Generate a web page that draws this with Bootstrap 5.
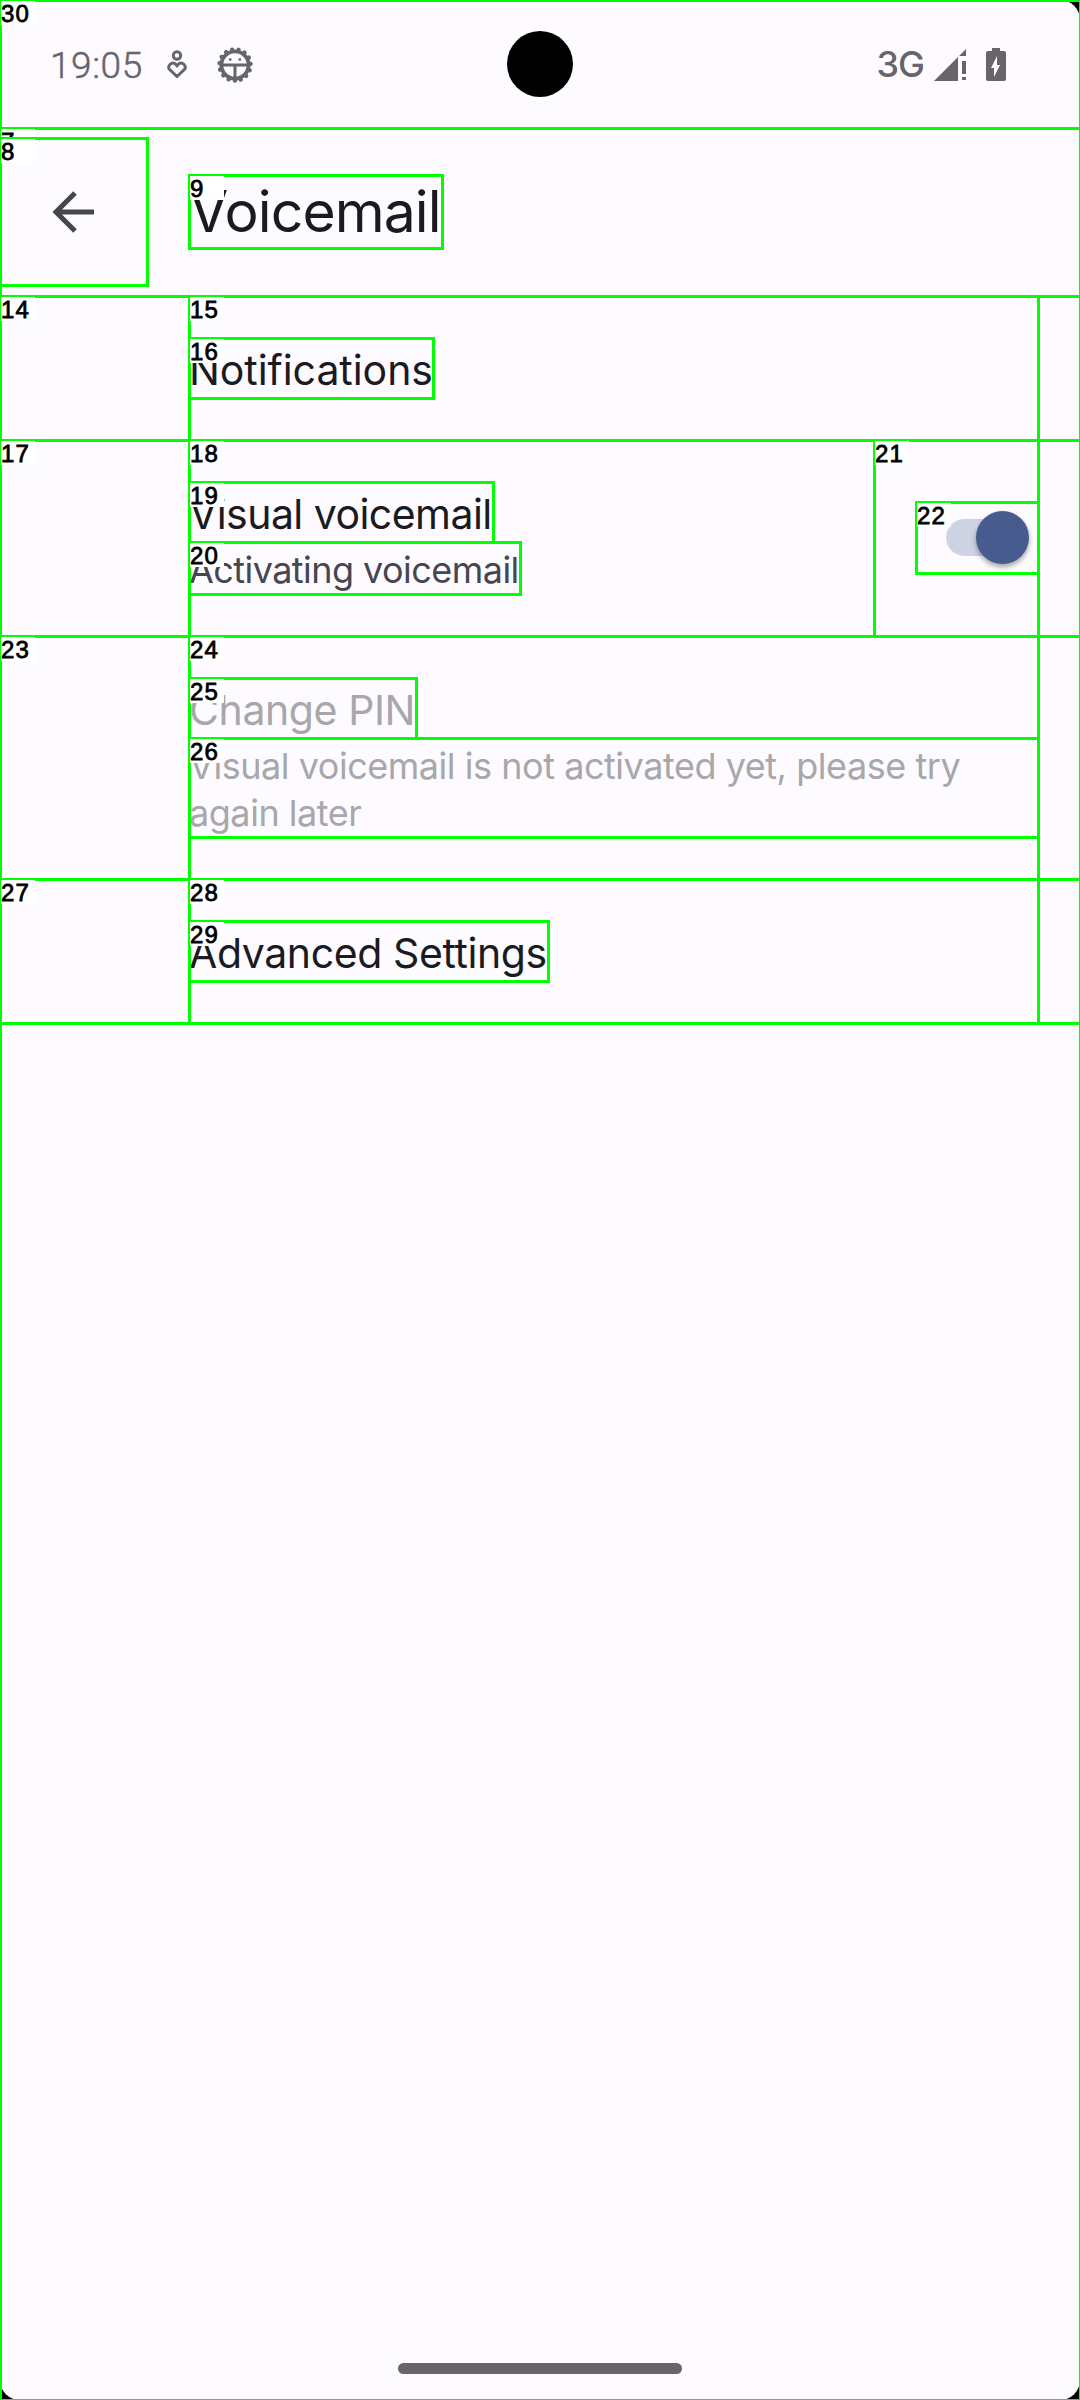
<!DOCTYPE html>
<html lang="en">
<head>
<meta charset="utf-8">
<meta name="viewport" content="width=device-width, initial-scale=1">
<title>Voicemail</title>
<link href="https://cdn.jsdelivr.net/npm/bootstrap@5.3.0/dist/css/bootstrap.min.css" rel="stylesheet">
<style>
html, body { margin: 0; background: #000; }
body { font-family: Inter, "Open Sans", sans-serif; color: #1b1b1f; }
.screen { width: 1080px; height: 2400px; background: #000; }
.surface { background: #fdfbff; border-radius: 20px; }
/* inspector frame drawn around each view */
.frame::before { content: ""; position: absolute; inset: -1px -2px -2px -1px; border: 3px solid #0f0; pointer-events: none; }
.tag { position: absolute; left: 1px; top: 1px; width: 34px; height: 24px; background: #fff; color: #000; font: 24px/25px "Liberation Sans", sans-serif; letter-spacing: 1.1px; -webkit-text-stroke: .8px #000; white-space: nowrap; }
.statusbar { height: 128px; color: #67656a; }
.clock { font: 300 37px/44px Roboto, sans-serif; -webkit-text-stroke: .5px #67656a; letter-spacing: .6px; margin-left: 50px; padding-top: 4px; width: 92px; }
.person { margin-left: 24px; margin-top: 1px; }
.gear { margin-left: 29px; margin-top: 1px; }
.net { font-size: 36px; line-height: 44px; font-weight: 500; letter-spacing: -1px; margin-right: -1px; }
.signal { margin-left: 11px; }
.battery { margin-left: 19px; margin-right: 74px; }
.camera { left: 507px; top: 31px; width: 66px; height: 66px; background: #000; }
.toolbar { height: 168px; padding: 10px 0 11px; }
.back { width: 147px; height: 147px; }
.back svg { margin-right: 1px; }
.title { width: 253px; height: 73px; margin: 37px 0 0 42px; font-size: 57px; line-height: 73px; letter-spacing: -.9px; }
.entry { padding-left: 189px; padding-right: 42px; }
.body-col { padding: 42px 0; }
.name { height: 60px; font-size: 41px; line-height: 64px; letter-spacing: -.4px; white-space: nowrap; }
.note { height: 52px; padding-top: 5px; font-size: 36px; line-height: 47px; letter-spacing: -.46px; color: #46464f; white-space: nowrap; }
.note.two-lines { height: 99px; }
.off, .off .note { color: #a8a7aa; }
.w-notif { width: 244px; letter-spacing: -.05px; }
.w-visual { width: 304px; letter-spacing: -.55px; }
.w-activating { width: 331px; letter-spacing: -.55px; }
.w-pin { width: 227px; }
.w-advanced { width: 359px; }
.w-col { width: 685px; }
.switch-col { width: 164px; padding-left: 42px; }
.switch-box { width: 122px; height: 71px; margin-bottom: 1px; }
.homebar { width: 284px; height: 11px; margin-bottom: 26px; background: #67656a; }
</style>
</head>
<body>
<div class="screen frame position-relative overflow-hidden">
<div class="surface h-100 d-flex flex-column">
  <header class="statusbar frame position-relative d-flex align-items-center">
    <div class="clock">19:05</div>
    <svg class="person" width="22" height="30" viewBox="0 0 22 30" fill="none" stroke="#67656a" stroke-width="3"><circle cx="11" cy="5.500" r="3.700"/><path d="M11 26.500 3.200 19.200A4.200 4.200 0 0 1 9.200 13.800L11 15.800l1.800-2A4.200 4.200 0 0 1 18.800 19.200Z"/></svg>
    <svg class="gear" width="36" height="36" viewBox="-18 -18 36 36"><circle r="13.600" fill="none" stroke="#67656a" stroke-width="3.800"/><circle r="15.700" fill="none" stroke="#67656a" stroke-width="4.200" stroke-linecap="round" stroke-dasharray=".1 6.476" transform="rotate(90)"/><path d="M-13 0H13M0 0V14" stroke="#67656a" stroke-width="3"/><circle cx="-4.800" cy="-5.400" r="1.400" fill="#67656a"/><circle cx="4.800" cy="-5.400" r="1.400" fill="#67656a"/></svg>
    <div class="net ms-auto">3G</div>
    <svg class="signal" width="33" height="33" viewBox="0 0 33 33" fill="#67656a"><path d="M0 33 24 9V33ZM25 8 32 1V8Z"/><path d="M28 13h4v13h-4zM28 29h4v3h-4z"/></svg>
    <svg class="battery" width="20" height="33" viewBox="0 0 20 33"><path fill="#67656a" d="M6 0h8v3h4q2 0 2 2v26q0 2-2 2H2q-2 0-2-2V5q0-2 2-2h4z"/><path fill="#fdfbff" d="M11 8v9h3L8 29v-9H5z"/></svg>
    <div class="camera position-absolute rounded-circle"></div>
    <span class="tag">30</span>
  </header>
  <nav class="toolbar frame position-relative d-flex">
    <span class="tag">7</span>
    <div class="back frame position-relative d-flex align-items-center justify-content-center">
      <svg width="42" height="42" viewBox="0 0 42 42" fill="none" stroke="#46464f" stroke-width="5"><path d="M42 21H4M23 2 4 21 23 40"/></svg>
      <span class="tag">8</span>
    </div>
    <div class="title frame position-relative">Voicemail<span class="tag">9</span></div>
  </nav>
  <main>
    <section class="entry frame position-relative">
      <span class="tag">14</span>
      <div class="body-col frame position-relative"><span class="tag">15</span>
        <div class="name w-notif frame position-relative">Notifications<span class="tag">16</span></div>
      </div>
    </section>
    <section class="entry frame position-relative d-flex">
      <span class="tag">17</span>
      <div class="body-col w-col frame position-relative"><span class="tag">18</span>
        <div class="name w-visual frame position-relative">Visual voicemail<span class="tag">19</span></div>
        <div class="note w-activating frame position-relative">Activating voicemail<span class="tag">20</span></div>
      </div>
      <div class="switch-col frame position-relative d-flex align-items-center"><span class="tag">21</span>
        <div class="switch-box frame position-relative">
          <svg class="d-block" width="122" height="71" viewBox="0 0 122 71"><defs><filter id="sh" x="-30%" y="-30%" width="160%" height="160%" color-interpolation-filters="sRGB"><feDropShadow dx="0" dy="3" stdDeviation="2.500" flood-opacity=".35"/></filter></defs><rect x="30" y="17" width="74" height="37" rx="18.500" fill="#ced3e4"/><circle cx="86.500" cy="35.500" r="26.500" fill="#485b8f" filter="url(#sh)"/></svg>
          <span class="tag">22</span>
        </div>
      </div>
    </section>
    <section class="entry frame position-relative off">
      <span class="tag">23</span>
      <div class="body-col frame position-relative"><span class="tag">24</span>
        <div class="name w-pin frame position-relative">Change PIN<span class="tag">25</span></div>
        <div class="note two-lines frame position-relative">Visual voicemail is not activated yet, please try<br>again later<span class="tag">26</span></div>
      </div>
    </section>
    <section class="entry frame position-relative">
      <span class="tag">27</span>
      <div class="body-col frame position-relative"><span class="tag">28</span>
        <div class="name w-advanced frame position-relative">Advanced Settings<span class="tag">29</span></div>
      </div>
    </section>
  </main>
  <div class="homebar rounded-pill mx-auto mt-auto"></div>
</div>
</div>
<script src="https://cdn.jsdelivr.net/npm/bootstrap@5.3.0/dist/js/bootstrap.bundle.min.js"></script>
</body>
</html>
